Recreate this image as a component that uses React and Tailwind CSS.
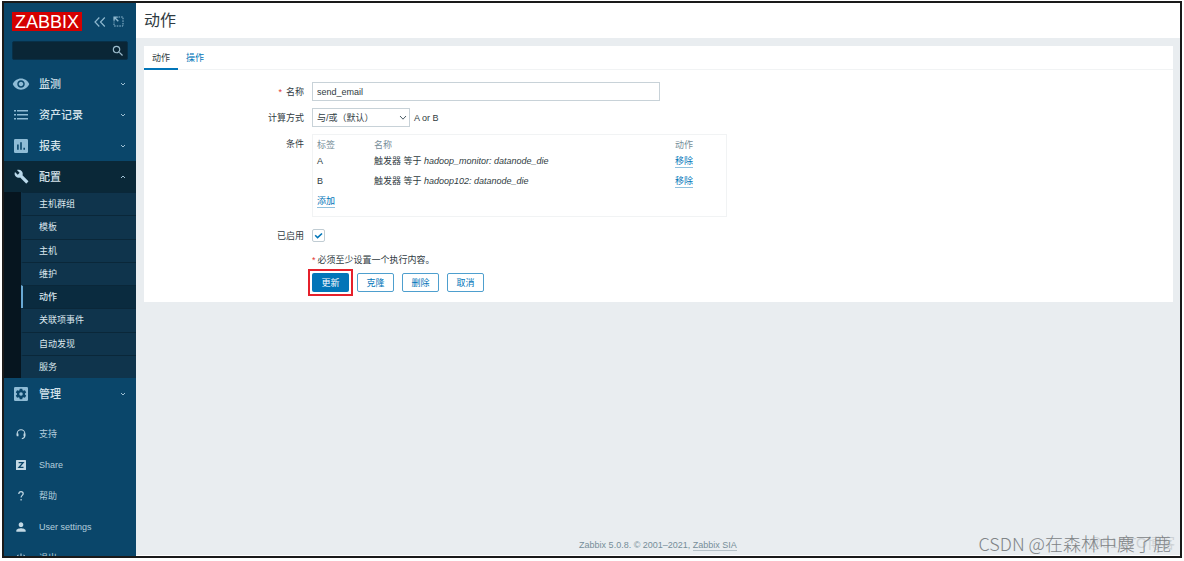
import React from "react";
import { MdVisibility, MdBuild, MdSearch, MdPerson, MdPowerSettingsNew } from "react-icons/md";

const ListIcon = () => (
  <svg viewBox="0 0 16 16" className="h-4 w-4" fill="currentColor" aria-hidden="true">
    <path d="M1 3h2v1.6H1zM4 3h11v1.6H4zM1 7h2v1.6H1zM4 7h11v1.6H4zM1 11h2v1.6H1zM4 11h11v1.6H4z" />
  </svg>
);

const ReportIcon = () => (
  <svg viewBox="0 0 14 14" className="h-[14px] w-[14px]" aria-hidden="true">
    <rect width="14" height="14" rx="1.2" fill="currentColor" />
    <path d="M3.9 10.8V5.6M7 10.8V3.2M10.2 10.8V8.8" stroke="#0a466a" strokeWidth="1.6" fill="none" />
  </svg>
);

const GearIcon = () => (
  <svg viewBox="0 0 24 24" className="h-[14px] w-[14px]" aria-hidden="true">
    <rect width="24" height="24" rx="2" fill="currentColor" />
    <g transform="translate(0.6 0.6) scale(0.95)">
      <path
        fill="#0a466a"
        d="M19.14 12.94c.04-.3.06-.61.06-.94 0-.32-.02-.64-.07-.94l2.03-1.58c.18-.14.23-.41.12-.61l-1.92-3.32c-.12-.22-.37-.29-.59-.22l-2.39.96c-.5-.38-1.03-.7-1.62-.94L14.4 2.81c-.04-.24-.24-.41-.48-.41h-3.84c-.24 0-.43.17-.47.41l-.36 2.54c-.59.24-1.13.57-1.62.94l-2.39-.96c-.22-.08-.47 0-.59.22L2.74 8.87c-.12.21-.08.47.12.61l2.03 1.58c-.05.3-.09.63-.09.94s.02.64.07.94l-2.03 1.58c-.18.14-.23.41-.12.61l1.92 3.32c.12.22.37.29.59.22l2.39-.96c.5.38 1.03.7 1.62.94l.36 2.54c.05.24.24.41.48.41h3.84c.24 0 .44-.17.47-.41l.36-2.54c.59-.24 1.13-.56 1.62-.94l2.39.96c.22.08.47 0 .59-.22l1.92-3.32c.12-.22.07-.47-.12-.61l-2.01-1.58z"
      />
      <circle cx="12" cy="12" r="3.2" fill="currentColor" />
    </g>
  </svg>
);

const SupportIcon = () => (
  <svg viewBox="0 0 12 12" className="h-3 w-3" fill="none" stroke="currentColor" aria-hidden="true">
    <path d="M2.2 7.4V5.6a3.8 3.8 0 0 1 7.6 0v2c0 1.8-1 2.9-3 3.1" strokeWidth="1.1" />
    <path d="M2.6 5.4v2.8M9.4 5.4v2.8" strokeWidth="1.7" />
  </svg>
);

const ShareIcon = () => (
  <svg viewBox="0 0 12 12" className="h-3 w-3" aria-hidden="true">
    <rect x="1" y="1" width="10" height="10" rx="0.6" fill="currentColor" />
    <path d="M3.6 3.7h4.5L4 8.3h4.5" fill="none" stroke="#0a466a" strokeWidth="1.3" />
  </svg>
);

const HelpIcon = () => (
  <svg viewBox="0 0 12 12" className="h-3 w-3" fill="none" stroke="currentColor" strokeWidth="1.2" aria-hidden="true">
    <path d="M3.8 4.1c0-1.6.9-2.5 2.2-2.5s2.2.8 2.2 2.1c0 1.6-2.1 1.9-2.1 3.8M6.1 9v1.5" />
  </svg>
);

const Chevron = ({ up }) => (
  <svg viewBox="0 0 6 6" className="h-[6px] w-[6px] text-[#9fc0d3]" fill="none" stroke="currentColor" aria-hidden="true">
    <path d={up ? "M1 4l2-2 2 2" : "M1 2l2 2 2-2"} />
  </svg>
);

const MainItem = ({ icon, label, open }) => (
  <button
    type="button"
    aria-expanded={!!open}
    className={
      "flex h-[31px] w-full shrink-0 items-center pl-2 pr-[10px] text-[11px] font-medium text-[#d5e3eb] " +
      (open ? "bg-[#0a2838]" : "")
    }
  >
    <span className={"flex w-[18px] justify-center " + (open ? "text-[#b9d8ea]" : "text-[#8fbcd6]")}>{icon}</span>
    <span className="ml-[9px] flex-1 text-left">{label}</span>
    <Chevron up={open} />
  </button>
);

const UserItem = ({ icon, label }) => (
  <a href="#" className="flex h-[31px] shrink-0 items-center pl-[11px] text-[#b4cedd]">
    <span className="flex w-3 justify-center text-[#c3d9e5]">{icon}</span>
    <span className="ml-3">{label}</span>
  </a>
);

const subItems = ["主机群组", "模板", "主机", "维护", "动作", "关联项事件", "自动发现", "服务"];

function Sidebar() {
  return (
    <nav className="flex w-[132px] shrink-0 flex-col overflow-hidden bg-[#0a466a]">
      <div className="flex shrink-0 items-center pl-2 pt-[9px]">
        <a href="#" className="flex h-[19px] w-[70px] items-center justify-center bg-[#d40000] text-[18px] leading-none text-white">
          ZABBIX
        </a>
        <button type="button" aria-label="Collapse" className="ml-3 text-[#8fb8cf]">
          <svg viewBox="0 0 12 12" className="h-3 w-3" fill="none" stroke="currentColor" strokeWidth="1.2">
            <path d="M5.3 1.5L1 6l4.3 4.5M10.8 1.5L6.5 6l4.3 4.5" />
          </svg>
        </button>
        <button type="button" aria-label="Hide" className="ml-[7px] text-[#8fb8cf]">
          <svg viewBox="0 0 11 11" className="h-[11px] w-[11px]" fill="none" stroke="currentColor">
            <path d="M5.5 1h4.5v9H1V5.5" strokeDasharray="1.6 1" />
            <path d="M1.1 4.8V1.1h3.7M1.5 1.5l3.8 3.8" strokeWidth="1.4" />
          </svg>
        </button>
      </div>
      <div className="mx-2 mt-[10px] flex h-[19px] shrink-0 items-center rounded-xs border border-[#083048] bg-[#0a2636] pr-[2px]">
        <input type="text" aria-label="Search" className="min-w-0 flex-1 bg-transparent px-1 text-white outline-none" />
        <button type="button" aria-label="Search" className="text-[#9dbccc]">
          <MdSearch className="h-[14px] w-[14px]" />
        </button>
      </div>
      <div className="mt-[8px] shrink-0">
        <MainItem icon={<MdVisibility className="h-[18px] w-[18px]" />} label="监测" />
        <MainItem icon={<ListIcon />} label="资产记录" />
        <MainItem icon={<ReportIcon />} label="报表" />
        <MainItem icon={<MdBuild className="h-[15px] w-[15px]" />} label="配置" open />
        <ul className="grid h-[186px] grid-rows-8 bg-[#06151f] pl-[17px]">
          {subItems.map((s) => (
            <li key={s} className="flex">
              <a
                href="#"
                className={
                  "flex flex-1 items-center border-t border-t-[#0a2739] border-l-2 pl-4 text-[#dbe7ee] " +
                  (s === "动作" ? "border-l-[#69a9d4] bg-[#0a2b3f] font-medium" : "border-l-[#0f344c] bg-[#0f344c]")
                }
              >
                {s}
              </a>
            </li>
          ))}
        </ul>
        <MainItem icon={<GearIcon />} label="管理" />
      </div>
      <div className="mt-[9px] shrink-0">
        <UserItem icon={<SupportIcon />} label="支持" />
        <UserItem icon={<ShareIcon />} label="Share" />
        <UserItem icon={<HelpIcon />} label="帮助" />
        <UserItem icon={<MdPerson className="h-[14px] w-[14px] shrink-0" />} label="User settings" />
        <UserItem icon={<MdPowerSettingsNew className="h-3 w-3" />} label="退出" />
      </div>
    </nav>
  );
}

const Row = ({ label, htmlFor, required, children, className = "" }) => (
  <div className={"flex gap-2 " + className}>
    <label htmlFor={htmlFor} className="flex h-[19px] w-40 shrink-0 items-center justify-end">
      {required && <span className="mr-1 text-[#e33734]">*</span>}
      {label}
    </label>
    {children}
  </div>
);

const LinkButton = ({ children }) => (
  <button type="button" className="border-b border-[#8fc0de] leading-[11px] text-[#0275b8]">
    {children}
  </button>
);

const OutlineButton = ({ children }) => (
  <button type="button" className="h-[19px] w-[37px] rounded-xs border border-[#4e9fce] bg-white text-[#0275b8]">
    {children}
  </button>
);

const conditions = [
  ["A", "hadoop_monitor: datanode_die"],
  ["B", "hadoop102: datanode_die"],
];

function ActionForm() {
  return (
    <form className="flex flex-col gap-[7px] pb-[10px] pt-3" onSubmit={(e) => e.preventDefault()}>
      <Row label="名称" htmlFor="name" required>
        <input
          id="name"
          type="text"
          defaultValue="send_email"
          className="h-[19px] w-[348px] border border-[#c8d2d8] bg-white px-1 outline-none"
        />
      </Row>
      <Row label="计算方式" htmlFor="calc">
        <div className="relative">
          <select id="calc" className="h-[19px] w-[98px] appearance-none border border-[#c8d2d8] bg-white px-1 outline-none">
            <option>与/或（默认）</option>
          </select>
          <svg
            viewBox="0 0 8 6"
            className="pointer-events-none absolute right-[3px] top-[7px] h-[6px] w-2"
            fill="none"
            stroke="#4a5a64"
            aria-hidden="true"
          >
            <path d="M1 1l3 3.2L7 1" />
          </svg>
        </div>
        <span className="-ml-1 flex items-center">A or B</span>
      </Row>
      <Row label="条件">
        <div className="w-[415px] border border-[#f1f3f4] pb-[5px] pl-1">
          <table className="w-full table-fixed border-collapse text-left">
            <thead>
              <tr className="h-4 align-bottom text-[#768d99]">
                <th className="w-[57px] p-0 font-normal">标签</th>
                <th className="p-0 font-normal">名称</th>
                <th className="w-[51px] p-0 font-normal">动作</th>
              </tr>
            </thead>
            <tbody>
              {conditions.map(([tag, value]) => (
                <tr key={tag} className="h-5">
                  <td className="p-0">{tag}</td>
                  <td className="p-0">
                    触发器 等于 <em>{value}</em>
                  </td>
                  <td className="p-0">
                    <LinkButton>移除</LinkButton>
                  </td>
                </tr>
              ))}
              <tr className="h-5">
                <td colSpan={3} className="p-0">
                  <LinkButton>添加</LinkButton>
                </td>
              </tr>
            </tbody>
          </table>
        </div>
      </Row>
      <Row label="已启用" htmlFor="enabled" className="h-[23px] items-center">
        <span className="relative flex">
          <input
            id="enabled"
            type="checkbox"
            defaultChecked
            className="peer h-[13px] w-[13px] appearance-none rounded-xs border border-[#c0ccd3] bg-white"
          />
          <svg
            viewBox="0 0 13 13"
            className="pointer-events-none absolute inset-0 hidden h-[13px] w-[13px] peer-checked:block"
            fill="none"
            stroke="#0275b8"
            strokeWidth="1.6"
            aria-hidden="true"
          >
            <path d="M3.2 6.2l2.4 2.5 4.4-4.2" />
          </svg>
        </span>
      </Row>
      <div className="pl-[168px] leading-3">
        <span className="mr-[2px] text-[#e33734]">*</span>
        必须至少设置一个执行内容。
      </div>
      <div className="flex gap-2 pl-[168px]">
        <span className="relative flex">
          <button type="submit" className="h-[19px] w-[37px] rounded-xs bg-[#0275b8] text-white">
            更新
          </button>
          <span className="pointer-events-none absolute -inset-x-1 -inset-y-1 border-2 border-[#e5202b]" />
        </span>
        <OutlineButton>克隆</OutlineButton>
        <OutlineButton>删除</OutlineButton>
        <OutlineButton>取消</OutlineButton>
      </div>
    </form>
  );
}

export default function App() {
  return (
    <div className="flex h-screen bg-white px-[2px] pb-[3px] pt-px font-['Liberation_Sans','Noto_Sans_CJK_SC',sans-serif] text-[9px] leading-3 text-[#2f3b42]">
      <div className="relative flex min-w-0 flex-1 overflow-hidden border-2 border-[#1a1a1a]">
        <Sidebar />
        <main className="flex min-w-0 flex-1 flex-col border-b border-white bg-[#e9edf0]">
          <header className="flex h-[35px] shrink-0 items-center bg-white pl-2">
            <h1 className="text-[16px] leading-5">动作</h1>
          </header>
          <section className="ml-2 mr-[7px] mt-2 bg-white">
            <div className="flex h-6 border-b border-[#f1f3f4]" role="tablist">
              <button type="button" role="tab" aria-selected="true" className="-mb-px w-[34px] border-b-2 border-[#0275b8] pt-px">
                动作
              </button>
              <button type="button" role="tab" aria-selected="false" className="w-[34px] text-[#0275b8]">
                操作
              </button>
            </div>
            <ActionForm />
          </section>
          <footer className="mt-auto pb-1 text-center text-[#768d99]">
            Zabbix 5.0.8. © 2001–2021,{" "}
            <a href="#" className="border-b border-[#b5c1c8]">
              Zabbix SIA
            </a>
          </footer>
        </main>
        <div className="pointer-events-none absolute bottom-[3px] right-[5px] text-[14px] leading-5 text-[#cdd1d4]">
          @51CTO博客
        </div>
        <div className="pointer-events-none absolute bottom-[3px] right-[9px] font-['Noto_Sans_CJK_SC',sans-serif] text-[18px] font-light leading-5 text-[#808487]">
          CSDN @在森林中麋了鹿
        </div>
      </div>
    </div>
  );
}
